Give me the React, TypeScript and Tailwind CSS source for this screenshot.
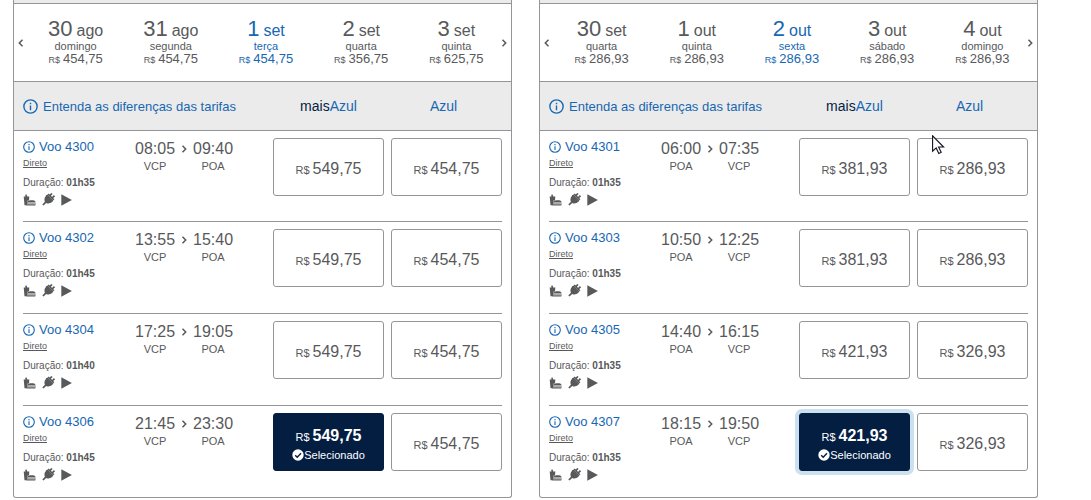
type Day = { num: string; month: string; weekday: string; price: string };
type Flight = {
  code: string;
  departure: string;
  arrival: string;
  duration: string;
  plus: string;
  basic: string;
  selected?: boolean;
  focused?: boolean;
};
type Trip = {
  label: string;
  from: string;
  to: string;
  days: Day[];
  flights: Flight[];
};

const trips: Trip[] = [
  {
    label: 'Ida',
    from: 'VCP',
    to: 'POA',
    days: [
      { num: '30', month: 'ago', weekday: 'domingo', price: '454,75' },
      { num: '31', month: 'ago', weekday: 'segunda', price: '454,75' },
      { num: '1', month: 'set', weekday: 'terça', price: '454,75' },
      { num: '2', month: 'set', weekday: 'quarta', price: '356,75' },
      { num: '3', month: 'set', weekday: 'quinta', price: '625,75' },
    ],
    flights: [
      { code: '4300', departure: '08:05', arrival: '09:40', duration: '01h35', plus: '549,75', basic: '454,75' },
      { code: '4302', departure: '13:55', arrival: '15:40', duration: '01h45', plus: '549,75', basic: '454,75' },
      { code: '4304', departure: '17:25', arrival: '19:05', duration: '01h40', plus: '549,75', basic: '454,75' },
      { code: '4306', departure: '21:45', arrival: '23:30', duration: '01h45', plus: '549,75', basic: '454,75', selected: true },
    ],
  },
  {
    label: 'Volta',
    from: 'POA',
    to: 'VCP',
    days: [
      { num: '30', month: 'set', weekday: 'quarta', price: '286,93' },
      { num: '1', month: 'out', weekday: 'quinta', price: '286,93' },
      { num: '2', month: 'out', weekday: 'sexta', price: '286,93' },
      { num: '3', month: 'out', weekday: 'sábado', price: '286,93' },
      { num: '4', month: 'out', weekday: 'domingo', price: '286,93' },
    ],
    flights: [
      { code: '4301', departure: '06:00', arrival: '07:35', duration: '01h35', plus: '381,93', basic: '286,93' },
      { code: '4303', departure: '10:50', arrival: '12:25', duration: '01h35', plus: '381,93', basic: '286,93' },
      { code: '4305', departure: '14:40', arrival: '16:15', duration: '01h35', plus: '421,93', basic: '326,93' },
      { code: '4307', departure: '18:15', arrival: '19:50', duration: '01h35', plus: '421,93', basic: '326,93', selected: true, focused: true },
    ],
  },
];

function InfoIcon({ className }: { className: string }) {
  return (
    <svg viewBox="0 0 14 14" className={className} fill="none" stroke="currentColor" strokeWidth="1.3" aria-hidden="true">
      <circle cx="7" cy="7" r="6.2" />
      <path d="M7 6v4.400M7 3.500v1.400" />
    </svg>
  );
}

function Chevron({ left = false }: { left?: boolean }) {
  return (
    <svg viewBox="0 0 6 8" className="h-2 w-1.5 shrink-0" fill="none" stroke="currentColor" strokeWidth="1.5" aria-hidden="true">
      <path d={left ? 'M4.500.8 1.300 4l3.200 3.200' : 'M1.500.8l3.200 3.200-3.200 3.200'} />
    </svg>
  );
}

function Amenities() {
  return (
    <div className="mt-1 flex h-[13px] items-center gap-1.5">
      <svg viewBox="0 0 13 12" className="h-3 w-[13px]" fill="currentColor" aria-hidden="true">
        <path d="M.7 2.600h1.900L2.100.9 3.400.3l.9 2.300h2L6 6.500H4.600L4 11.300H1.500z" />
        <path d="M4.700 7.300C5.500 6.500 6.800 6.300 8.500 6.300c2.200 0 3.800.4 4 1.700H4.600z" />
        <path d="M3.500 8.600h9.200v1H3.500zM3.500 10.200h9.200c0 .9-.4 1.400-1.200 1.400H3.500z" />
      </svg>
      <svg viewBox="0 0 13 13" className="h-[13px] w-[13px]" fill="currentColor" aria-hidden="true">
        <path d="M4.300 1.900 10.700 8.300 9.900 9C8.200 10.600 6 10.800 4.200 9.900L1.500 12.600.3 11.500 2.900 8.700C2 6.900 2.400 4.500 3.900 3z" />
        <path d="M5.700 1.500 6.700.5l5.700 5.700-1 1z" />
        <path d="M7.800 2.700 10 .5M10.100 5 12.500 2.700" fill="none" stroke="currentColor" strokeWidth="1.700" />
        <path d="M3.800 2.400 5.700 1.500 11.400 7.200 10.400 8.600z" />
      </svg>
      <svg viewBox="0 0 11 12" className="h-3 w-[11px]" fill="currentColor" aria-hidden="true">
        <path d="M.3.300 10.900 6 .3 11.700z" />
      </svg>
    </div>
  );
}

function Price({ value, selected = false, focused = false }: { value: string; selected?: boolean; focused?: boolean }) {
  const tone = selected ? 'border-[#041e42] bg-[#041e42] text-white' : 'border-[#939598] bg-white';
  const ring = focused ? 'ring-4 ring-[#cce1f0]' : '';
  return (
    <button type="button" aria-pressed={selected} className={`flex h-[58px] flex-col items-center justify-center rounded-[3px] border pt-1 ${tone} ${ring}`}>
      <span className="flex items-baseline gap-[3px] text-[16px] leading-5">
        <span className="text-[11px]">R$</span>
        <span className={selected ? 'font-bold' : ''}>{value}</span>
      </span>
      {selected && (
        <span className="flex items-center text-[11px] leading-4">
          <svg viewBox="0 0 12 12" className="h-3 w-3" aria-hidden="true">
            <circle cx="6" cy="6" r="5.700" fill="white" />
            <path d="M3.200 6.200 5.200 8.200 9 4.200" fill="none" stroke="#041e42" strokeWidth="1.400" />
          </svg>
          Selecionado
        </span>
      )}
    </button>
  );
}

function FlightRow({ flight, from, to }: { flight: Flight; from: string; to: string }) {
  return (
    <li className="grid h-[92px] grid-cols-[112px_minmax(0,1fr)_111px_111px] items-start border-b border-[#939598] pt-[7px] first:h-[91px] last:h-[91px] last:border-b-0">
      <div>
        <a href="#voo" className="flex h-[17px] items-center gap-1 text-[13px] text-[#1767b2]">
          <InfoIcon className="h-3 w-3" />
          Voo {flight.code}
        </a>
        <a href="#direto" className="mt-0.5 block text-[9px] leading-3 underline underline-offset-1">
          Direto
        </a>
        <p className="mt-2 text-[10px] leading-3">
          Duração: <strong>{flight.duration}</strong>
        </p>
        <Amenities />
      </div>
      <div className="flex pt-px">
        <div className="text-center">
          <p className="text-[16px] leading-5">{flight.departure}</p>
          <p className="text-[11px] leading-[15px]">{from}</p>
        </div>
        <div className="flex h-5 w-[18px] items-center justify-center">
          <Chevron />
        </div>
        <div className="text-center">
          <p className="text-[16px] leading-5">{flight.arrival}</p>
          <p className="text-[11px] leading-[15px]">{to}</p>
        </div>
      </div>
      <div className="col-span-2 -ml-[7px] grid grid-cols-2 gap-[7px]">
        <Price value={flight.plus} selected={flight.selected} focused={flight.focused} />
        <Price value={flight.basic} />
      </div>
    </li>
  );
}

function TripPanel({ trip }: { trip: Trip }) {
  return (
    <section aria-label={trip.label} className="min-w-0 rounded-b-[3px] border border-t-0 border-[#939598]">
      <div className="h-1 border-b border-[#939598] bg-[#ebebeb]" />
      <div className="flex h-[78px] items-stretch border-b border-[#939598]">
        <button type="button" aria-label="Datas anteriores" className="flex w-3.5 shrink-0 items-center justify-center">
          <Chevron left />
        </button>
        <div className="grid flex-1 grid-cols-5">
          {trip.days.map((day, i) => (
            <button type="button" key={day.num} className={`flex flex-col items-center pt-3 ${i === 2 ? 'text-[#1767b2]' : ''}`}>
              <span className="flex h-6 items-baseline gap-1 text-[22px] leading-[26px]">
                {day.num}
                <span className="text-[16px]">{day.month}</span>
              </span>
              <span className="text-[11px] leading-3">{day.weekday}</span>
              <span className="flex items-baseline gap-[3px] text-[13px] leading-[14px]">
                <span className="text-[9px]">R$</span>
                {day.price}
              </span>
            </button>
          ))}
        </div>
        <button type="button" aria-label="Próximas datas" className="-ml-[7px] flex w-3.5 shrink-0 items-center justify-center">
          <Chevron />
        </button>
      </div>
      <div className="flex h-[49px] items-center border-b border-[#939598] bg-[#ebebeb] pr-3 pl-[9px] text-[#1767b2]">
        <a href="#tarifas" className="flex items-center gap-[5px] pt-px text-[13px]">
          <InfoIcon className="h-[15px] w-[15px]" />
          Entenda as diferenças das tarifas
        </a>
        <div className="ml-auto grid w-[226px] grid-cols-2 gap-1 text-center text-[14px]">
          <span>
            <span className="text-[#041e42]">mais</span>Azul
          </span>
          <span>Azul</span>
        </div>
      </div>
      <ul className="px-[9px]">
        {trip.flights.map((flight) => (
          <FlightRow key={flight.code} flight={flight} from={trip.from} to={trip.to} />
        ))}
      </ul>
    </section>
  );
}

export default function App() {
  return (
    <main className="relative min-h-screen bg-white font-['Liberation_Sans',Arial,sans-serif] text-[#58595b]">
      <div className="grid grid-cols-2 gap-[27px] pr-[53px] pl-[13px]">
        {trips.map((trip) => (
          <TripPanel key={trip.label} trip={trip} />
        ))}
      </div>
      <svg viewBox="0 0 13 20" className="pointer-events-none absolute top-[135px] left-[932px] h-5 w-[13px]" aria-hidden="true">
        <path d="M.6.8v15.400l3.600-3.300 2.600 5.500 2.400-1.100-2.600-5.300h5z" fill="white" stroke="#101020" strokeWidth="1.100" />
      </svg>
    </main>
  );
}
